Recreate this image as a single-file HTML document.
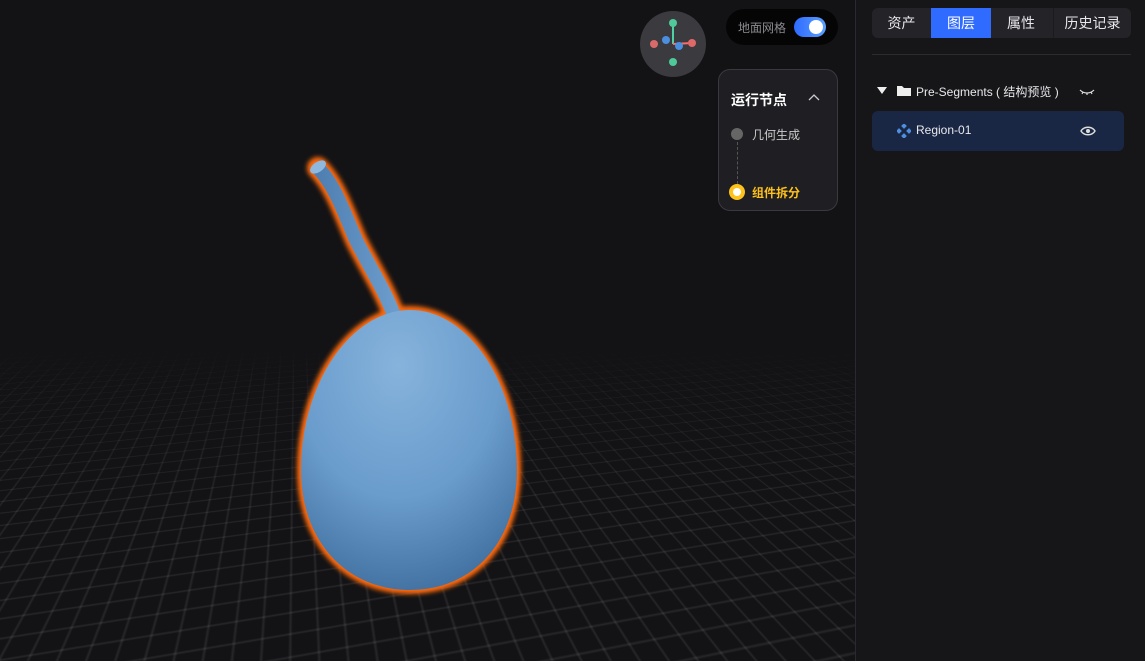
<!DOCTYPE html>
<html><head><meta charset="utf-8"><style>
*{margin:0;padding:0;box-sizing:border-box}
html,body{width:1145px;height:661px;overflow:hidden}
body{background:#131316;position:relative;font-family:"Liberation Sans","Noto Sans CJK SC",sans-serif;color:#e8e8ec}
#vp{position:absolute;left:0;top:0;width:855px;height:661px;overflow:hidden;background:#131316}
#gridwrap{position:absolute;left:0;top:345px;width:855px;height:316px;perspective:600px;perspective-origin:50% -80px;overflow:hidden;-webkit-mask-image:linear-gradient(to bottom,transparent 0,rgba(0,0,0,.5) 40px,#000 160px);}
#grid{position:absolute;left:-1600px;top:-1500px;width:4055px;height:3000px;transform:rotateX(76deg) rotateZ(-12deg);transform-origin:50% 50%;
background-image:linear-gradient(rgba(255,255,255,.085) 1px,transparent 1px),linear-gradient(90deg,rgba(255,255,255,.085) 1px,transparent 1px);background-size:12px 12px}
#side{position:absolute;left:855px;top:0;width:290px;height:661px;background:#161619;border-left:1px solid #2a2a2e}
.tabs{position:absolute;left:16px;top:8px;width:259px;height:30px;background:#242428;border-radius:6px;overflow:hidden}
.tabs div{position:absolute;top:0;height:30px;text-align:center;line-height:30px;font-size:14px;color:#e8e8ec}
.tabs div.on{background:#2f6bff;color:#fff}
.sep{position:absolute;left:16px;top:54px;width:259px;height:1px;background:#2c2c30}
.row{position:absolute;font-size:12px;color:#e8e8ec}
</style></head><body>
<div id="vp">
<div id="gridwrap"><div id="grid"></div></div>
<svg width="855" height="661" style="position:absolute;left:0;top:0">
<defs>
<radialGradient id="bg" cx="45%" cy="20%" r="85%"><stop offset="0" stop-color="#86b3dc"/><stop offset=".55" stop-color="#6a9ccc"/><stop offset="1" stop-color="#3f6e9e"/></radialGradient>
<linearGradient id="sg" x1="0" y1="0" x2="1" y2="0"><stop offset="0" stop-color="#4f7fb0"/><stop offset="1" stop-color="#6b9ccc"/></linearGradient>
<filter id="gl" x="-20%" y="-20%" width="140%" height="140%"><feGaussianBlur stdDeviation="2.5"/></filter>
</defs>
<g filter="url(#gl)">
<path d="M318 168 C335 185 345 215 356 240 C370 268 385 290 395 318" stroke="#ff6a10" stroke-width="22" fill="none" stroke-linecap="round"/>
<path d="M410 306 C470 306 521 380 521 470 C521 545 475 594 410 594 C345 594 297 545 297 470 C297 380 350 306 410 306Z" fill="#ff6a10"/>
</g>
<path d="M318 168 C335 185 345 215 356 240 C370 268 385 290 395 318" stroke="url(#sg)" stroke-width="14" fill="none"/>
<ellipse cx="318" cy="167" rx="9" ry="5" fill="#8fb8df" transform="rotate(-35 318 167)"/>
<path d="M410 310 C468 310 517 382 517 470 C517 542 473 590 410 590 C347 590 301 542 301 470 C301 382 352 310 410 310Z" fill="url(#bg)"/>
</svg>
<div style="position:absolute;left:640px;top:11px;width:66px;height:66px;border-radius:50%;background:#3b3b3f"></div>
<svg width="66" height="66" style="position:absolute;left:640px;top:11px">
<line x1="33" y1="33" x2="33" y2="12" stroke="#4fd1a5" stroke-width="2"/>
<line x1="33" y1="33" x2="52" y2="32" stroke="#ff6b6b" stroke-width="2"/>
<circle cx="33" cy="12" r="4" fill="#4fc99a"/><circle cx="33" cy="51" r="4" fill="#4fc99a"/>
<circle cx="14" cy="33" r="4" fill="#d86a6a"/><circle cx="52" cy="32" r="4" fill="#e06868"/>
<circle cx="26" cy="29" r="4" fill="#4a8fe0"/><circle cx="39" cy="35" r="4" fill="#4a8fe0"/>
</svg>
<div style="position:absolute;left:726px;top:9px;width:112px;height:36px;border-radius:18px;background:#050506">
<span style="position:absolute;left:12px;top:10px;font-size:12px;color:#8a8a90">地面网格</span>
<div style="position:absolute;left:68px;top:8px;width:32px;height:20px;border-radius:10px;background:linear-gradient(90deg,#2f6bff,#5aa0ff)"><div style="position:absolute;right:3px;top:3px;width:14px;height:14px;border-radius:50%;background:#fff"></div></div>
</div>
<div style="position:absolute;left:718px;top:69px;width:120px;height:142px;border-radius:12px;background:#1f1f23;border:1px solid #3a3a3e">
<span style="position:absolute;left:12px;top:20px;font-size:14px;font-weight:bold;color:#fff">运行节点</span>
<svg width="12" height="8" style="position:absolute;left:89px;top:24px"><path d="M1 6L6 1L11 6" stroke="#ccc" stroke-width="1.3" fill="none"/></svg>
<div style="position:absolute;left:12px;top:58px;width:12px;height:12px;border-radius:50%;background:#666"></div>
<div style="position:absolute;left:18px;top:72px;height:42px;border-left:1px dashed #555"></div>
<span style="position:absolute;left:33px;top:56px;font-size:12px;color:#ccc">几何生成</span>
<div style="position:absolute;left:10px;top:114px;width:16px;height:16px;border-radius:50%;background:#ffc21a"><div style="position:absolute;left:4px;top:4px;width:8px;height:8px;border-radius:50%;background:#fff"></div></div>
<span style="position:absolute;left:33px;top:114px;font-size:12px;font-weight:bold;color:#ffc21a">组件拆分</span>
</div>
</div>
<div id="side">
<div class="tabs"><div style="left:0;width:59px">资产</div><div class="on" style="left:59px;width:60px">图层</div><div style="left:119px;width:60px">属性</div><div style="left:181px;width:78px;border-left:1px solid #1b1b1e">历史记录</div></div>
<div class="sep"></div>
<svg width="10" height="8" style="position:absolute;left:21px;top:87px"><path d="M0 0H10L5 7Z" fill="#eee"/></svg>
<svg width="14" height="11" style="position:absolute;left:41px;top:85px"><path d="M0 1h5l2 2h7v8H0z" fill="#eee"/></svg>
<div class="row" style="left:60px;top:83px">Pre-Segments ( 结构预览 )</div>
<svg width="16" height="8" style="position:absolute;left:223px;top:88px"><path d="M1 2C5 6 11 6 15 2M4 4L3 6M8 5V7M12 4L13 6" stroke="#ddd" stroke-width="1.2" fill="none"/></svg>
<div style="position:absolute;left:16px;top:111px;width:252px;height:40px;border-radius:6px;background:#1a2744"></div>
<svg width="14" height="14" style="position:absolute;left:41px;top:124px"><g fill="#4f8fe0"><rect x="5" y="0" width="4" height="4" transform="rotate(45 7 2)"/><rect x="0" y="5" width="4" height="4" transform="rotate(45 2 7)"/><rect x="10" y="5" width="4" height="4" transform="rotate(45 12 7)"/><rect x="5" y="10" width="4" height="4" transform="rotate(45 7 12)"/></g></svg>
<div class="row" style="left:60px;top:123px">Region-01</div>
<svg width="16" height="12" style="position:absolute;left:224px;top:125px"><path d="M1 6C4 1 12 1 15 6C12 11 4 11 1 6Z" fill="none" stroke="#ddd" stroke-width="1.4"/><circle cx="8" cy="6" r="2" fill="#ddd"/></svg>
</div>
</body></html>
